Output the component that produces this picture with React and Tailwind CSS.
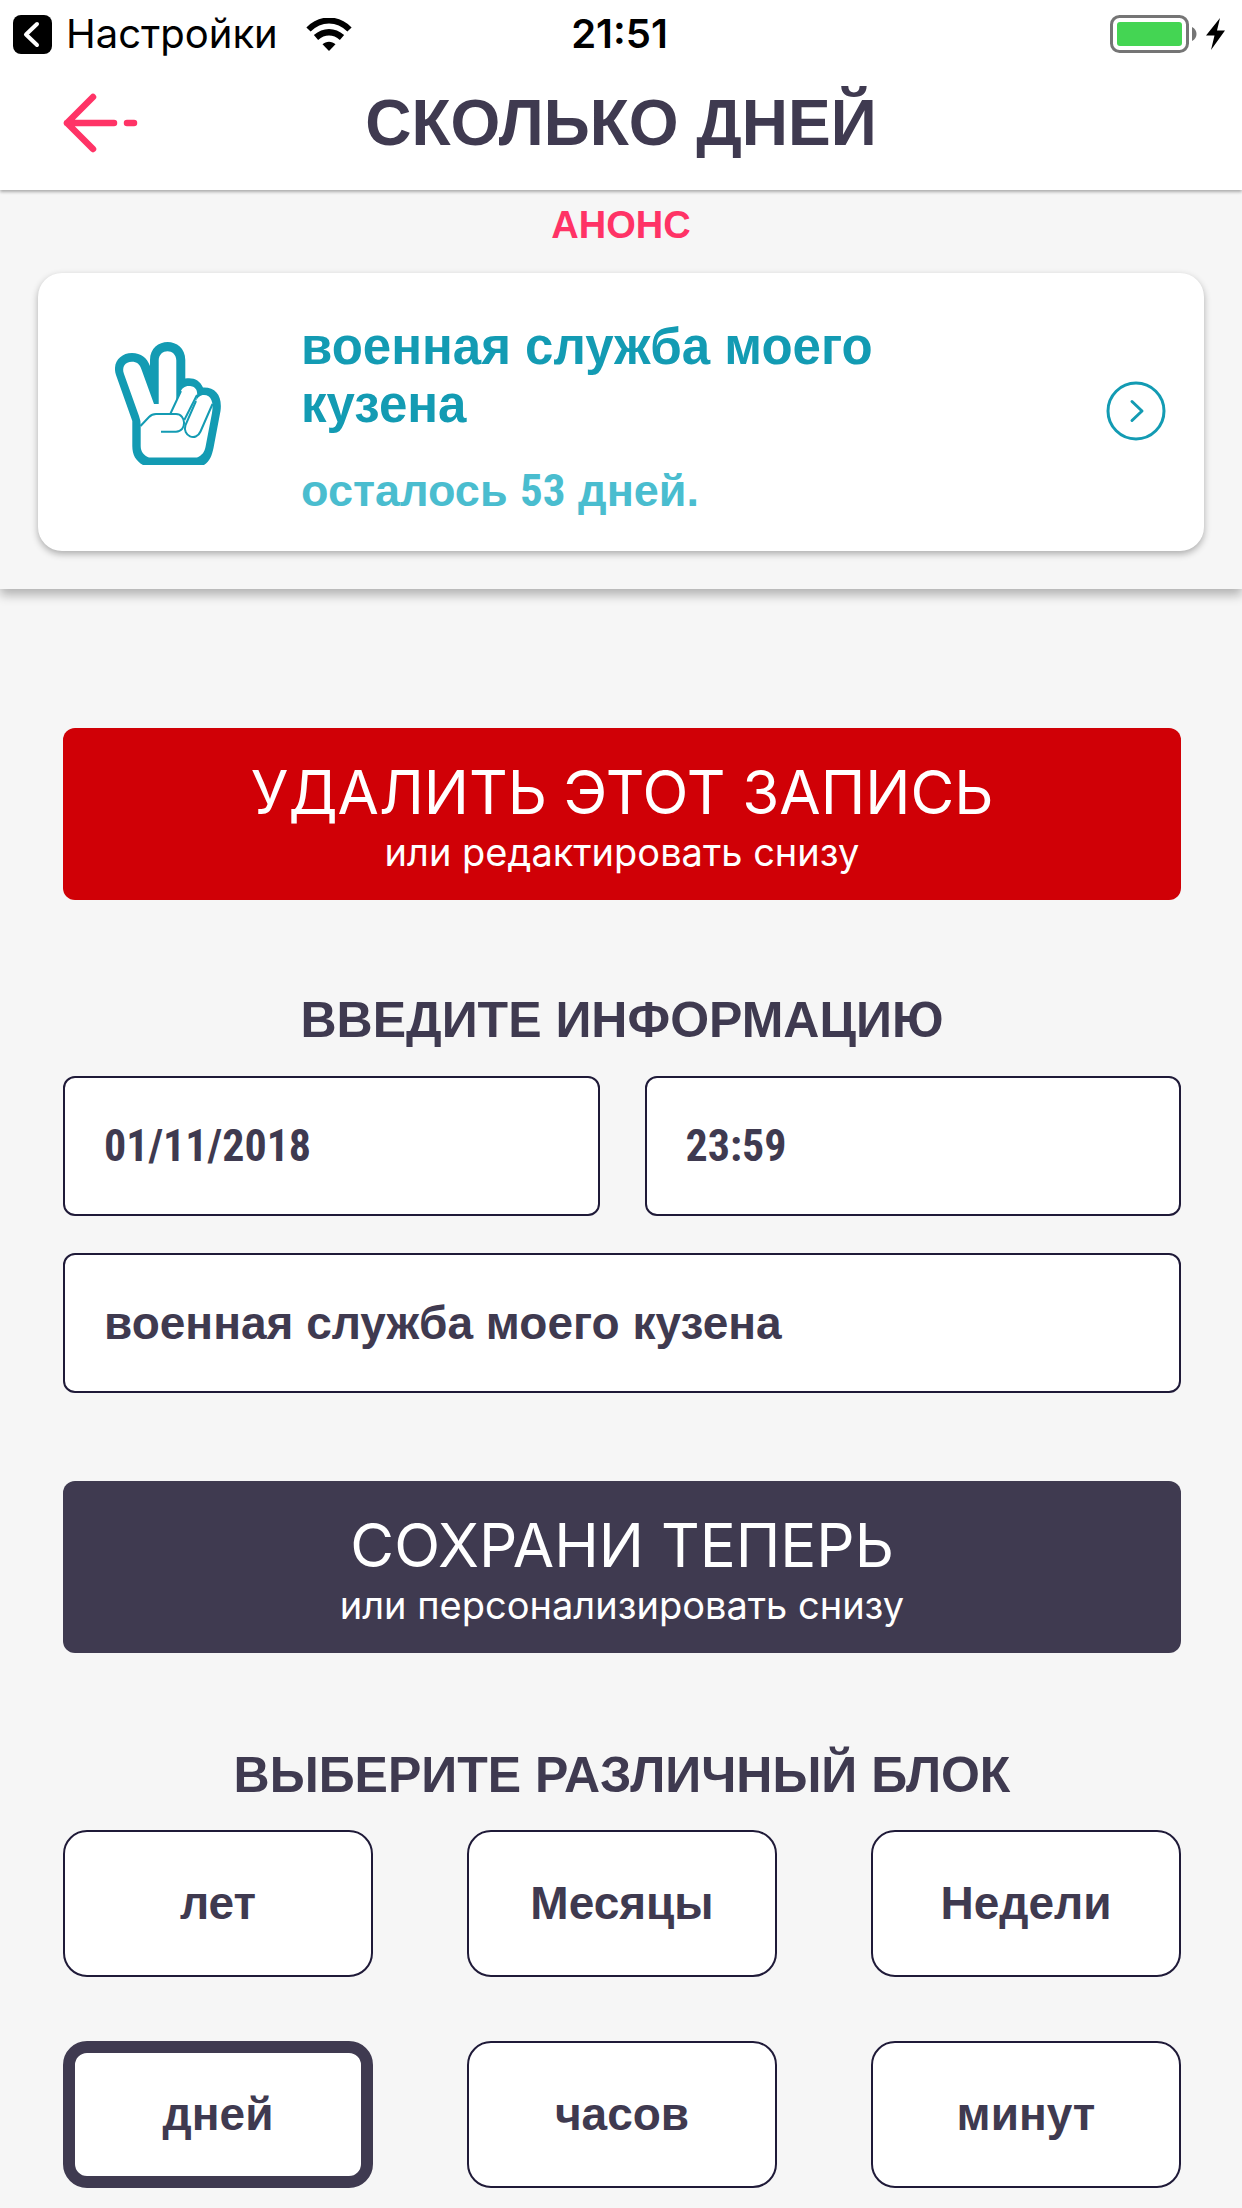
import { useState } from "react";

const helv = "font-['Liberation_Sans',Arial,sans-serif]";
const narrow = "font-['Liberation_Sans_Narrow','Roboto_Condensed',Roboto,sans-serif]";

function StatusBar() {
  return (
    <div className="grid h-[68px] grid-cols-[1fr_auto_1fr] items-center pr-4 pl-[13px] text-black">
      <div className="flex items-center">
        <button type="button" className="flex items-center gap-3.5 text-[40px] leading-none">
          <svg width="39" height="39" viewBox="0 0 39 39" aria-hidden="true">
            <rect width="39" height="39" rx="8" />
            <path d="M24 9 L13 19.5 L24 30" fill="none" stroke="#fff" strokeWidth="4" strokeLinecap="round" strokeLinejoin="round" />
          </svg>
          Настройки
        </button>
        <svg className="ml-7" width="46" height="33" viewBox="0 0 46 33" aria-label="Wi-Fi">
          <path d="M2.500 11.500 C14.500 -0.500 31.500 -0.500 43.500 11.500" fill="none" stroke="#000" strokeWidth="6" />
          <path d="M10 19.500 C18 12.500 28 12.500 36 19.500" fill="none" stroke="#000" strokeWidth="6.500" />
          <path d="M23 33 L16.500 26.200 C20 22.800 26 22.800 29.500 26.200 Z" />
        </svg>
      </div>
      <span className="text-[40px] leading-none font-semibold">21:51</span>
      <div className="flex items-center justify-end gap-2">
        <svg width="88" height="38" viewBox="0 0 88 38" aria-label="Аккумулятор">
          <rect x="1.500" y="1.500" width="76" height="35" rx="8" fill="#fff" stroke="#757575" strokeWidth="3" />
          <rect x="7" y="7" width="65" height="24" rx="3" fill="#44d553" />
          <path d="M82 12 C88 15 88 23 82 26 Z" fill="#757575" />
        </svg>
        <svg width="20" height="32" viewBox="0 0 20 32" aria-hidden="true">
          <path d="M14 0 L0 17.500 H8.500 L5 32 L19 12.500 H11 Z" />
        </svg>
      </div>
    </div>
  );
}

function Header() {
  return (
    <header className="relative z-10 bg-white shadow-[0_2px_3px_rgba(0,0,0,0.3)]">
      <StatusBar />
      <div className="grid h-[122px] grid-cols-[100px_1fr_100px] items-center px-[60px] pb-3">
        <button type="button" aria-label="Назад">
          <svg width="80" height="62" viewBox="0 0 80 62" fill="none" stroke="#ff3366" strokeWidth="6.500" strokeLinecap="round" strokeLinejoin="round">
            <path d="M33 5 L7 31 L33 57 M7 31 H54 M67 31 H74" />
          </svg>
        </button>
        <h1 className={`${helv} text-center text-[64px] leading-none font-bold text-[#3f3a50]`}>СКОЛЬКО ДНЕЙ</h1>
      </div>
    </header>
  );
}

function VictoryHand() {
  return (
    <svg width="106" height="123" viewBox="0 0 106 123" aria-hidden="true">
      <path
        fill="#139bb3"
        d="M17 11 C5 11 -3 21 1 33 L17.300 79 V104 C17.300 113 21 119 28 123 H89 C95 119 97 113 98.500 106 L105.500 69 C107.500 54 101 45 88 45.500 C85 38 78 35 70.300 36.500 V18 C70.300 -6 35 -6 35 18 V24 C32 16 26 11 17 11 Z"
      />
      <path
        fill="#fff"
        d="M17 19.700 C10 19.700 6.500 25 9 32 L24 74 Q25.700 78 25.700 84 V104 C25.700 110 29 113.500 34 115.500 H82 C87 113.500 89.500 110 90.500 105 L97 71 C99 60 96 53 89 53 C85 53 83 55 80.500 60 C85 48 80 44 74 44 C69.500 44 67 46 65 51 L61.300 58 V18.500 C61.300 6 43.700 6 43.700 18.500 V62 H39 L26.500 27.500 C25 22 21.500 19.700 17 19.700 Z"
      />
      <g fill="none" stroke="#139bb3" strokeWidth="2">
        <path d="M66 49 L55.500 71.500" />
        <path d="M82 53 L69.300 78" />
        <path d="M81 59 L70.500 83 C67 94 81 100 85.500 89.500 L97.500 62" />
        <path d="M25.500 84 L34 75 Q37 72 41 72 H61 C71.500 72 72 89.700 61 89.700 H46" />
      </g>
    </svg>
  );
}

function Announcement() {
  return (
    <section className="flex flex-col px-[38px] pb-[38px] shadow-[0_6px_10px_rgba(0,0,0,0.28)]">
      <h2 className={`${helv} pt-2.5 pb-[22px] text-center text-[38px] leading-[51px] font-bold text-[#ff3366]`}>АНОНС</h2>
      <article className="flex min-h-[278px] items-center rounded-3xl bg-white pr-[38px] pl-[77px] shadow-[0_3px_7px_rgba(0,0,0,0.3)]">
        <div className="pb-[18px]">
          <VictoryHand />
        </div>
        <div className={`${helv} ml-20 flex flex-1 flex-col gap-7 pt-3.5 font-bold`}>
          <h3 className="max-w-[640px] text-[51px] leading-[58px] text-[#139bb3]">военная служба моего кузена</h3>
          <p className="text-[45px] leading-[58px] text-[#4abdcf]">
            осталось <span className={narrow}>53</span> дней.
          </p>
        </div>
        <button type="button" aria-label="Открыть" className="pb-0.5">
          <svg width="60" height="60" viewBox="0 0 60 60" fill="none" stroke="#139bb3" strokeWidth="3" strokeLinecap="round" strokeLinejoin="round">
            <circle cx="30" cy="30" r="28" />
            <path d="M26 20.500 L36 30 L26 39.500" />
          </svg>
        </button>
      </article>
    </section>
  );
}

function ActionButton({ title, note, color }) {
  return (
    <button type="button" className={`flex min-h-[172px] w-full flex-col items-center justify-center rounded-xl pt-2 text-white ${color}`}>
      <span className="text-[60px] leading-[68px] font-normal">{title}</span>
      <span className="text-[38px] leading-[52px]">{note}</span>
    </button>
  );
}

function SectionTitle({ children }) {
  return <h2 className={`${helv} text-center text-[50px] leading-[58px] font-bold text-[#3f3a50]`}>{children}</h2>;
}

function Field({ label, initial, font }) {
  const [value, setValue] = useState(initial);
  return (
    <input
      type="text"
      aria-label={label}
      value={value}
      onChange={(e) => setValue(e.target.value)}
      className={`${font} h-[140px] w-full min-w-0 rounded-xl border-2 border-[#1f1a38] bg-white px-[39px] font-bold text-[#3f3a50]`}
    />
  );
}

const units = ["лет", "Месяцы", "Недели", "дней", "часов", "минут"];

export default function App() {
  const [unit, setUnit] = useState("дней");
  return (
    <div className="min-h-screen bg-[#f6f6f6] font-[Inter,sans-serif]">
      <Header />
      <Announcement />
      <main className="pr-[61px] pl-[63px] pt-[139px] pb-[21px]">
        <ActionButton title="УДАЛИТЬ ЭТОТ ЗАПИСЬ" note="или редактировать снизу" color="bg-[#d00006]" />
        <form className="pt-[91px]" onSubmit={(e) => e.preventDefault()}>
          <SectionTitle>ВВЕДИТЕ ИНФОРМАЦИЮ</SectionTitle>
          <div className="mt-[27px] grid grid-cols-2 gap-x-[45px] gap-y-[37px]">
            <Field label="Дата" initial="01/11/2018" font={`${narrow} text-[44px]`} />
            <Field label="Время" initial="23:59" font={`${narrow} text-[44px]`} />
            <div className="col-span-2">
              <Field label="Название" initial="военная служба моего кузена" font={`${helv} text-[46px]`} />
            </div>
          </div>
        </form>
        <div className="pt-[88px]">
          <ActionButton title="СОХРАНИ ТЕПЕРЬ" note="или персонализировать снизу" color="bg-[#3f3a50]" />
        </div>
        <section className="pt-[93px]">
          <SectionTitle>ВЫБЕРИТЕ РАЗЛИЧНЫЙ БЛОК</SectionTitle>
          <div className="mt-[26px] grid grid-cols-3 gap-x-[94px] gap-y-16">
            {units.map((name) => (
              <button
                key={name}
                type="button"
                aria-pressed={unit === name}
                onClick={() => setUnit(name)}
                className={`${helv} h-[147px] rounded-3xl bg-white text-[46px] font-bold text-[#3f3a50] ${unit === name ? "border-[12px] border-[#3f3a50]" : "border-2 border-[#1f1a38]"}`}
              >
                {name}
              </button>
            ))}
          </div>
        </section>
      </main>
    </div>
  );
}
